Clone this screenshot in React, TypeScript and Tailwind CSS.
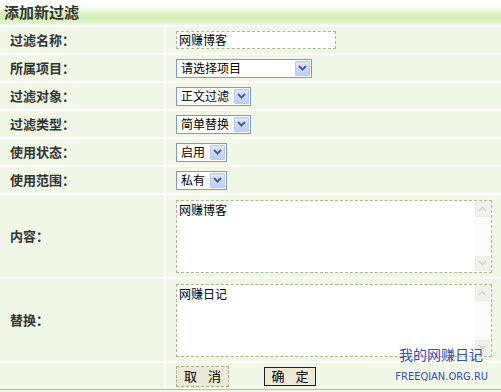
import React from "react";

const font = { fontFamily: '"SimSun","Noto Sans CJK SC","DejaVu Sans",sans-serif' };

function Chevron() {
  return (
    <svg width="9" height="6" viewBox="0 0 9 6">
      <path d="M1 1 L4.5 4.5 L8 1" stroke="#4d6185" strokeWidth="2" fill="none" />
    </svg>
  );
}

function ScrollBtn({ up }: { up?: boolean }) {
  return (
    <div className="flex h-[15px] items-center justify-center rounded-[2px] border border-[#ecebe4] bg-[#f2f2ec]">
      <svg width="9" height="6" viewBox="0 0 9 6">
        <path d={up ? "M1 5 L4.5 1.5 L8 5" : "M1 1 L4.5 4.5 L8 1"} stroke="#cfcfc6" strokeWidth="1.5" fill="none" />
      </svg>
    </div>
  );
}

function Select({ text, w }: { text: string; w: string }) {
  return (
    <div className={`flex items-center h-[19px] border border-[#7f9db9] bg-white ${w}`}>
      <span className="flex-1 pl-[4px] text-[12px] leading-none text-black">{text}</span>
      <div className="mr-[1px] flex h-[15px] w-[15px] items-center justify-center rounded-[1px] border border-[#b8cbf2] bg-[linear-gradient(to_bottom,#dde7fd,#bccdf6)]">
        <Chevron />
      </div>
    </div>
  );
}

function Row({ label, children, h = "h-[26px]" }: { label: string; children: React.ReactNode; h?: string }) {
  return (
    <div className={`flex gap-[2px] ${h}`}>
      <div className="flex w-[164px] items-center bg-[#f0f7e7] pl-[10px] text-[13px] font-bold text-[#333]">{label}</div>
      <div className="flex flex-1 items-center bg-[#f0f7e7] pl-[10px]">{children}</div>
    </div>
  );
}

function Area({ text }: { text: string }) {
  return (
    <div className="flex h-[73px] w-[316px] border border-dashed border-[#a8b98a] bg-white">
      <div className="flex-1 pl-[2px] pt-[1px] text-[12px] leading-[15px] text-black">{text}</div>
      <div className="flex w-[17px] flex-col justify-between bg-[#fbfbf9] p-[1px]">
        <ScrollBtn up />
        <ScrollBtn />
      </div>
    </div>
  );
}

export default function App() {
  return (
    <div className="relative h-[392px] w-[501px] overflow-hidden bg-white" style={font}>
      <div className="flex h-[25px] items-center bg-[linear-gradient(to_bottom,#ffffff_0%,#f6fcee_35%,#d8f1bd_55%,#d4efb8_75%,#eef8e4_100%)] pl-[4px] text-[15px] font-bold text-[#333]">
        添加新过滤
      </div>
      <div className="flex flex-col gap-[2px] pt-[2px]">
        <Row label="过滤名称：">
          <div className="flex h-[18px] w-[160px] items-center border border-dashed border-[#a8b98a] bg-white pl-[2px] text-[12px] text-black">网赚博客</div>
        </Row>
        <Row label="所属项目："><Select text="请选择项目" w="w-[136px]" /></Row>
        <Row label="过滤对象："><Select text="正文过滤" w="w-[75px]" /></Row>
        <Row label="过滤类型："><Select text="简单替换" w="w-[75px]" /></Row>
        <Row label="使用状态："><Select text="启用" w="w-[51px]" /></Row>
        <Row label="使用范围："><Select text="私有" w="w-[51px]" /></Row>
        <Row label="内容：" h="h-[82px]"><Area text="网赚博客" /></Row>
        <Row label="替换：" h="h-[82px]"><Area text="网赚日记" /></Row>
        <Row label="">
          <div className="flex items-center">
            <div className="flex h-[21px] w-[53px] items-center justify-center gap-[11px] border border-dashed border-[#a8b090] bg-[#ece9d8] text-[13px] text-black"><span>取</span><span>消</span></div>
            <div className="ml-[35px] flex h-[19px] w-[52px] items-center justify-center gap-[11px] border border-[#222] bg-[#ece9d8] text-[13px] text-black"><span>确</span><span>定</span></div>
          </div>
        </Row>
      </div>
      <div className="absolute left-0 top-[389px] h-[1px] w-full bg-[#a6cc85]" />
      <div className="absolute left-0 top-[390px] h-[2px] w-full bg-[#f2f8ec]" />
      <div className="absolute right-[18px] top-[347px] text-[14px] leading-none text-[#3a4cb5]">我的网赚日记</div>
      <div className="absolute right-[13px] top-[371px] text-[11px] leading-none text-[#3a4cb5]" style={{ fontFamily: '"Liberation Sans Narrow","DejaVu Sans Condensed",sans-serif' }}>FREEQIAN.ORG.RU</div>
    </div>
  );
}
